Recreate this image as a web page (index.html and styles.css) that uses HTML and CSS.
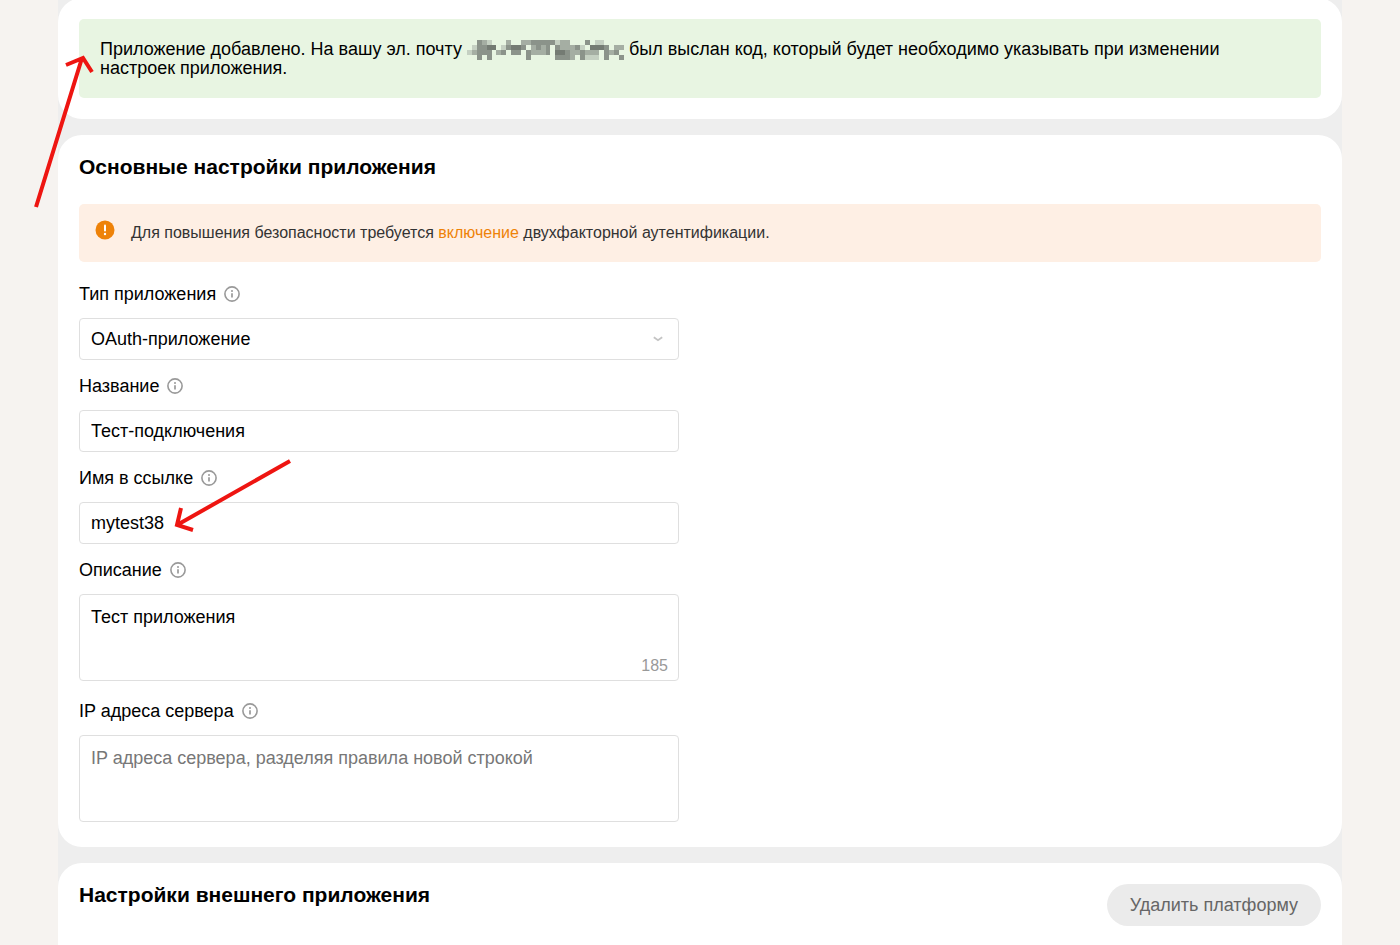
FILE: index.html
```html
<!DOCTYPE html>
<html lang="ru">
<head>
    <meta charset="UTF-8">
    <meta name="viewport" content="width=device-width, initial-scale=1.0">
    <title>Настройки приложения</title>
    <link rel="stylesheet" href="styles.css">
</head>
<body>
    <svg class="symbols" aria-hidden="true">
        <symbol id="icon-info" viewBox="0 0 16 16">
            <circle cx="8" cy="8" r="7.1" fill="none" stroke="currentColor" stroke-width="1.6"/>
            <circle cx="8" cy="4.9" r="1" fill="currentColor"/>
            <path d="M8 7.2v4.4" fill="none" stroke="currentColor" stroke-width="1.7"/>
        </symbol>
    </svg>

    <main class="page">
        <section class="card">
            <p class="notice">Приложение добавлено. На вашу эл. почту
                <svg class="masked" viewBox="0 0 32 4" preserveAspectRatio="none" shape-rendering="crispEdges" aria-hidden="true">
                    <path fill="#c5d0c2" d="M0 2h1v1h-1zM1 1h1v1h-1zM4 0h1v1h-1zM7 1h1v1h-1zM18 0h1v1h-1zM23 1h1v1h-1zM24 3h3v1h-3zM26 0h2v1h-2zM28 2h1v1h-1zM30 1h1v1h-1z"/>
                    <path fill="#a5aea3" d="M1 2h1v1h-1zM3 0h1v1h-1zM6 2h2v1h-2zM8 0h1v1h-1zM11 0h2v1h-2zM13 1h1v2h-1zM14 2h3v1h-3zM15 1h1v1h-1zM19 0h2v2h-2zM21 1h1v3h-1zM22 2h1v1h-1zM24 2h3v1h-3zM29 2h1v1h-1zM30 1h2v1h-2z"/>
                    <path fill="#8b938a" d="M2 0h1v4h-1zM3 1h1v2h-1zM4 2h1v2h-1zM7 2h1v1h-1zM8 1h1v1h-1zM9 2h2v1h-2zM11 1h1v1h-1zM12 2h1v2h-1zM13 0h5v1h-5zM14 1h1v1h-1zM16 1h1v2h-1zM18 1h1v3h-1zM19 3h2v1h-2zM20 2h1v1h-1zM22 1h1v1h-1zM23 2h1v2h-1zM24 0h1v1h-1zM28 1h1v3h-1zM30 2h1v1h-1zM31 3h1v1h-1z"/>
                    <path fill="#747b73" d="M4 1h2v1h-2zM9 1h2v1h-2zM18 2h2v1h-2zM25 1h3v1h-3z"/>
                </svg>
                был выслан код, который будет необходимо указывать при изменении настроек приложения.</p>
        </section>

        <section class="card">
            <h2>Основные настройки приложения</h2>

            <div class="warning">
                <svg class="warning-icon" viewBox="0 0 20 20" aria-hidden="true">
                    <circle cx="10" cy="10" r="9.5" fill="#ee8208"/>
                    <path d="M10 5.4v5" stroke="#fff" stroke-width="2" stroke-linecap="round"/>
                    <circle cx="10" cy="14" r="1.2" fill="#fff"/>
                </svg>
                <p>Для повышения безопасности требуется <a href="#">включение</a> двухфакторной аутентификации.</p>
            </div>

            <form class="settings">
                <div class="field">
                    <label for="app-type">Тип приложения <svg class="info"><use href="#icon-info"/></svg></label>
                    <div class="control">
                        <select id="app-type">
                            <option>OAuth-приложение</option>
                        </select>
                        <svg class="chevron" viewBox="0 0 10 6" aria-hidden="true">
                            <path d="M0.8 1.2 L5 4.2 L9.2 1.2" fill="none" stroke="#c4c4c4" stroke-width="1.8"/>
                        </svg>
                    </div>
                </div>

                <div class="field">
                    <label for="app-name">Название <svg class="info"><use href="#icon-info"/></svg></label>
                    <input type="text" id="app-name" value="Тест-подключения">
                </div>

                <div class="field">
                    <label for="app-link">Имя в ссылке <svg class="info"><use href="#icon-info"/></svg></label>
                    <input type="text" id="app-link" value="mytest38">
                </div>

                <div class="field field-area">
                    <label for="app-about">Описание <svg class="info"><use href="#icon-info"/></svg></label>
                    <div class="control">
                        <textarea id="app-about">Тест приложения</textarea>
                        <span class="counter">185</span>
                    </div>
                </div>

                <div class="field field-area">
                    <label for="app-ip">IP адреса сервера <svg class="info"><use href="#icon-info"/></svg></label>
                    <textarea id="app-ip" placeholder="IP адреса сервера, разделяя правила новой строкой"></textarea>
                </div>
            </form>
        </section>

        <section class="card card-platform">
            <h2>Настройки внешнего приложения</h2>
            <button type="button" class="delete-btn">Удалить платформу</button>
        </section>
    </main>

    <!-- Red pointer arrows -->
    <svg class="arrow arrow-notice" viewBox="0 0 62 156" aria-hidden="true">
        <path d="M4 153 L50 4 M34 11 L51 4 L60 18"/>
    </svg>
    <svg class="arrow arrow-link" viewBox="0 0 120 78" aria-hidden="true">
        <path d="M118 4 L5 68 M9 51 L5 68 L21 73"/>
    </svg>
</body>
</html>
```

FILE: styles.css
```css
* {
    margin: 0;
    padding: 0;
    box-sizing: border-box;
}

body {
    position: relative;
    height: 100vh;
    overflow: hidden;
    font-family: "Liberation Sans", Arial, sans-serif;
    font-size: 18px;
    color: #000;
    background: #f6f3f0;
}

.symbols {
    display: none;
}

.page {
    display: flex;
    flex-direction: column;
    gap: 16px;
    margin: -2px 58px 0;
    background: #eee;
}

.card {
    padding: 21px;
    background: #fff;
    border-radius: 24px;
}

h2 {
    font-size: 21px;
    line-height: 22px;
    font-weight: bold;
}

.notice {
    padding: 21px 64px 20px 21px;
    line-height: 19px;
    background: #e8f5e2;
    border-radius: 5px;
}

.masked {
    width: 157px;
    height: 20px;
    margin: -3px 0;
    vertical-align: middle;
}

.warning {
    display: flex;
    gap: 16px;
    margin: 26px 0 21px;
    padding: 16px;
    color: #333;
    font-size: 16px;
    line-height: 26px;
    background: #feefe4;
    border-radius: 5px;
}

.warning-icon {
    width: 20px;
    height: 20px;
}

.warning a {
    color: #ee8208;
    text-decoration: none;
}

.settings {
    display: flex;
    flex-direction: column;
    gap: 15px;
    max-width: 600px;
}

.field {
    display: flex;
    flex-direction: column;
    gap: 13px;
}

.field-area {
    padding-bottom: 4px;
}

label {
    display: flex;
    align-items: center;
    gap: 8px;
    line-height: 22px;
}

.info {
    width: 16px;
    height: 16px;
    color: #999;
}

.control {
    position: relative;
    display: flex;
}

input,
select,
textarea {
    display: block;
    width: 100%;
    height: 42px;
    padding: 0 11px;
    font: inherit;
    color: #000;
    background: #fff;
    border: 1px solid #dfdfdf;
    border-radius: 4px;
    outline: none;
}

select {
    appearance: none;
}

textarea {
    height: 87px;
    padding: 11px;
    line-height: 22px;
    resize: none;
}

textarea::placeholder {
    color: #777;
}

.chevron {
    position: absolute;
    top: 18px;
    right: 16px;
    width: 10px;
    height: 6px;
}

.counter {
    position: absolute;
    right: 11px;
    bottom: 5px;
    font-size: 16px;
    line-height: 20px;
    color: #999;
}

.card-platform {
    display: flex;
    justify-content: space-between;
    align-items: flex-start;
    min-height: 120px;
}

.delete-btn {
    height: 42px;
    padding: 0 23px;
    font: inherit;
    color: #666;
    background: #ebebeb;
    border: none;
    border-radius: 21px;
    cursor: pointer;
}

.arrow {
    position: absolute;
    fill: none;
    stroke: #ee1511;
    stroke-width: 4;
    pointer-events: none;
}

.arrow-notice {
    top: 54px;
    left: 32px;
    width: 62px;
    height: 156px;
}

.arrow-link {
    top: 457px;
    left: 172px;
    width: 120px;
    height: 78px;
}
```
